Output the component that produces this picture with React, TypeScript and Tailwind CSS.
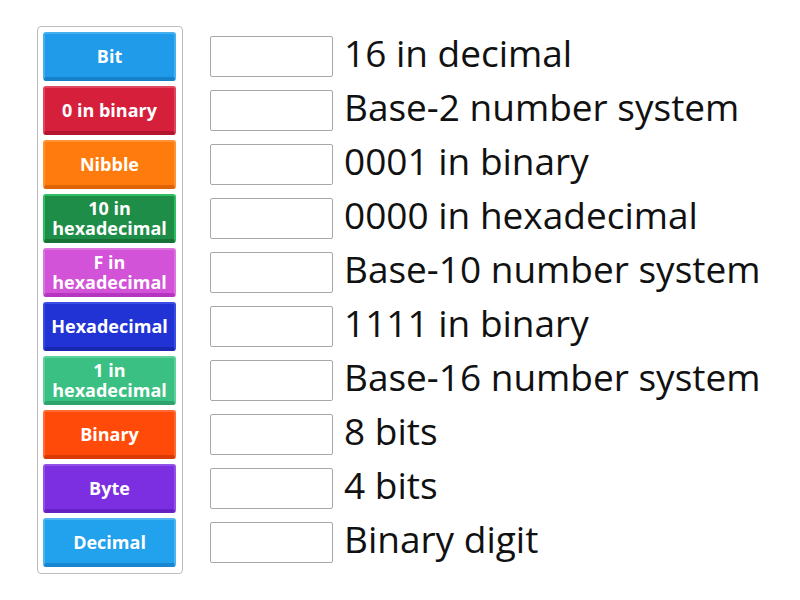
const tiles = [
  { label: "Bit", cls: "bg-[#1f9be9] border-[#45b0f0] border-b-[#1681c9]" },
  { label: "0 in binary", cls: "bg-[#d61f3b] border-[#e04660] border-b-[#b3152e]" },
  { label: "Nibble", cls: "bg-[#ff7b0d] border-[#ff9336] border-b-[#e06405]" },
  { label: "10 in hexadecimal", cls: "bg-[#1e8d48] border-[#2fbf63] border-b-[#177238]" },
  { label: "F in hexadecimal", cls: "bg-[#d252d8] border-[#dc74e0] border-b-[#b635c0]" },
  { label: "Hexadecimal", cls: "bg-[#2233d6] border-[#3a4de4] border-b-[#1a27b0]" },
  { label: "1 in hexadecimal", cls: "bg-[#3bc083] border-[#5ed09b] border-b-[#2ea26c]" },
  { label: "Binary", cls: "bg-[#ff4a0a] border-[#ff6b33] border-b-[#d93a03]" },
  { label: "Byte", cls: "bg-[#7b2fe0] border-[#9351ea] border-b-[#6420c2]" },
  { label: "Decimal", cls: "bg-[#22a1ec] border-[#4db5f2] border-b-[#1887cf]" },
];

const targets = [
  "16 in decimal",
  "Base-2 number system",
  "0001 in binary",
  "0000 in hexadecimal",
  "Base-10 number system",
  "1111 in binary",
  "Base-16 number system",
  "8 bits",
  "4 bits",
  "Binary digit",
];

export default function App() {
  return (
    <div
      className="w-[800px] h-[600px] bg-white flex items-start pt-[26px] pl-[37px]"
      style={{ fontFamily: '"Open Sans", "Liberation Sans", sans-serif' }}
    >
      {/* tile column */}
      <div className="w-[146px] border border-[#bdbdbd] rounded-[4px] pl-[5px] pt-[5px] pb-[6px] flex flex-col gap-[5px]">
        {tiles.map((t) => (
          <div
            key={t.label}
            className={`w-[133px] h-[49px] rounded-[3px] border-x-2 border-t-2 border-b-4 flex items-center justify-center text-center text-white font-bold text-[18px] leading-[20px] ${t.cls}`}
          >
            {t.label}
          </div>
        ))}
      </div>

      {/* targets */}
      <div className="flex flex-col pt-[10px] ml-[27px]">
        {targets.map((t) => (
          <div key={t} className="h-[54px] flex items-start">
            <div className="w-[123px] h-[41px] border border-[#a8a8a8] rounded-[2px] bg-white" />
            <div className="ml-[11px] text-[37px] leading-[41px] text-[#111] -mt-[4px] whitespace-nowrap">
              {t}
            </div>
          </div>
        ))}
      </div>
    </div>
  );
}
